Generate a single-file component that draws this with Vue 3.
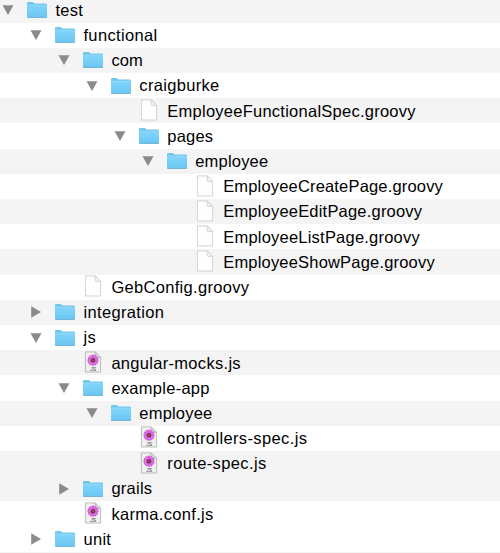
<script setup>
const rows = [
  ['test', 0, 'folder', 'open', 0.25],
  ['functional', 1, 'folder', 'open', 0.34],
  ['com', 2, 'folder', 'open', 0.1],
  ['craigburke', 3, 'folder', 'open', 0.32],
  ['EmployeeFunctionalSpec.groovy', 4, 'file', '', 0.25],
  ['pages', 4, 'folder', 'open', 0.2],
  ['employee', 5, 'folder', 'open', 0.19],
  ['EmployeeCreatePage.groovy', 6, 'file', '', 0.17],
  ['EmployeeEditPage.groovy', 6, 'file', '', 0.2],
  ['EmployeeListPage.groovy', 6, 'file', '', 0.22],
  ['EmployeeShowPage.groovy', 6, 'file', '', 0.19],
  ['GebConfig.groovy', 2, 'file', '', 0.31],
  ['integration', 1, 'folder', 'closed', 0.35],
  ['js', 1, 'folder', 'open', 0.3],
  ['angular-mocks.js', 2, 'script', '', 0.3],
  ['example-app', 2, 'folder', 'open', 0.27],
  ['employee', 3, 'folder', 'open', 0.19],
  ['controllers-spec.js', 4, 'script', '', 0.37],
  ['route-spec.js', 4, 'script', '', 0.37],
  ['grails', 2, 'folder', 'closed', 0.25],
  ['karma.conf.js', 2, 'script', '', 0.32],
  ['unit', 1, 'folder', 'closed', 0.3],
].map(([name, depth, kind, state, tracking], i) => ({
  name, depth, kind, state, tracking,
  shaded: i < 19 ? i % 2 === 0 : i === 19,
}))
const petals = Array.from({ length: 12 }, (_, i) => i * 30)
</script>

<template>
  <div class="tree">
    <div v-for="(row, i) in rows" :key="i" class="row" :class="{ shaded: row.shaded }" :style="{ paddingLeft: row.depth * 27.95 + 'px' }">
      <span class="toggle">
        <svg v-if="row.state" width="12" height="12" viewBox="0 0 12 12">
          <path :d="row.state === 'open' ? 'M.5 1.2H11.5L6 11Z' : 'M1.2 .3V11.7L11 6Z'" fill="#8b8b8b" />
        </svg>
      </span>
      <span class="icon">
        <svg v-if="row.kind === 'folder'" width="22" height="18" viewBox="0 0 22 18">
          <defs>
            <linearGradient :id="'f' + i" x1="0" y1="0" x2="0" y2="1">
              <stop offset="0" stop-color="#83d5fb" />
              <stop offset="1" stop-color="#68c6f3" />
            </linearGradient>
          </defs>
          <path d="M1 16V2Q1 1 2 1H6.6Q7.3 1 7.8 1.8L8.3 2.6H20Q21 2.6 21 3.6V16Z" fill="#72c7ed" />
          <path d="M1 4.3H21V15.8Q21 16.5 20.3 16.5H1.7Q1 16.5 1 15.8Z" :fill="`url(#f${i})`" />
          <path d="M1.2 4.2H20.8" stroke="#9bdffc" stroke-width=".7" />
          <path d="M1.2 16.5H20.8" stroke="#6aaac9" stroke-width=".8" />
        </svg>
        <svg v-else class="document" :class="row.kind" width="18" height="22" viewBox="0 0 18 22">
          <path class="sheet" d="M1.4 .9H11.2L16.6 6.4V21H1.4Z" />
          <path class="fold" d="M11.2 .9V5.6Q11.2 6.4 12 6.4H16.6Z" />
          <g v-if="row.kind === 'script'">
            <ellipse v-for="angle in petals" :key="angle" cx="9" cy="6" rx="1.4" ry="2.4" fill="#e26ee8" stroke="#b845c2" stroke-width=".3" :transform="`rotate(${angle} 9 9.2)`" />
            <circle cx="9" cy="9.2" r="2.2" fill="#743048" />
            <circle cx="9" cy="9.2" r=".9" fill="#a65a48" />
            <text x="9.2" y="19.6" text-anchor="middle" class="badge">JS</text>
          </g>
        </svg>
      </span>
      <span class="name" :style="{ letterSpacing: row.tracking + 'px' }">{{ row.name }}</span>
    </div>
  </div>
</template>

<style>
body { background: #fff; overflow: hidden; }
</style>
<style scoped>
.tree { box-sizing: border-box; height: 553px; overflow: hidden; background: #fff; display: flex; flex-direction: column; }
.tree::after { content: ""; flex: 1; background: #f4f4f4; }
.row { display: flex; flex: none; align-items: center; box-sizing: border-box; height: 25.2px; font: 16.5px/25.2px "Liberation Sans", Arial, sans-serif; color: #000; }
.row.shaded { background: #f4f4f4; }
.row:first-child { margin-top: -2.5px; }
.toggle { display: flex; flex: 0 0 26px; padding-left: 2px; box-sizing: border-box; }
.icon { display: flex; flex: 0 0 29.5px; box-sizing: border-box; justify-content: center; padding-right: 7.5px; }
.document { margin-bottom: 1.6px; }
.sheet { fill: #fefefe; stroke: #c8c8c8; stroke-width: .8; }
.fold { fill: #f3f3f3; stroke: #c8c8c8; stroke-width: .7; }
.script .sheet { fill: #f0f0f0; stroke: #adadad; }
.script .fold { fill: #d8d8d8; stroke: #adadad; }
.name { white-space: nowrap; padding-top: .8px; }
.badge { font: italic 5px "Liberation Sans", Arial, sans-serif; fill: #444; }
</style>
